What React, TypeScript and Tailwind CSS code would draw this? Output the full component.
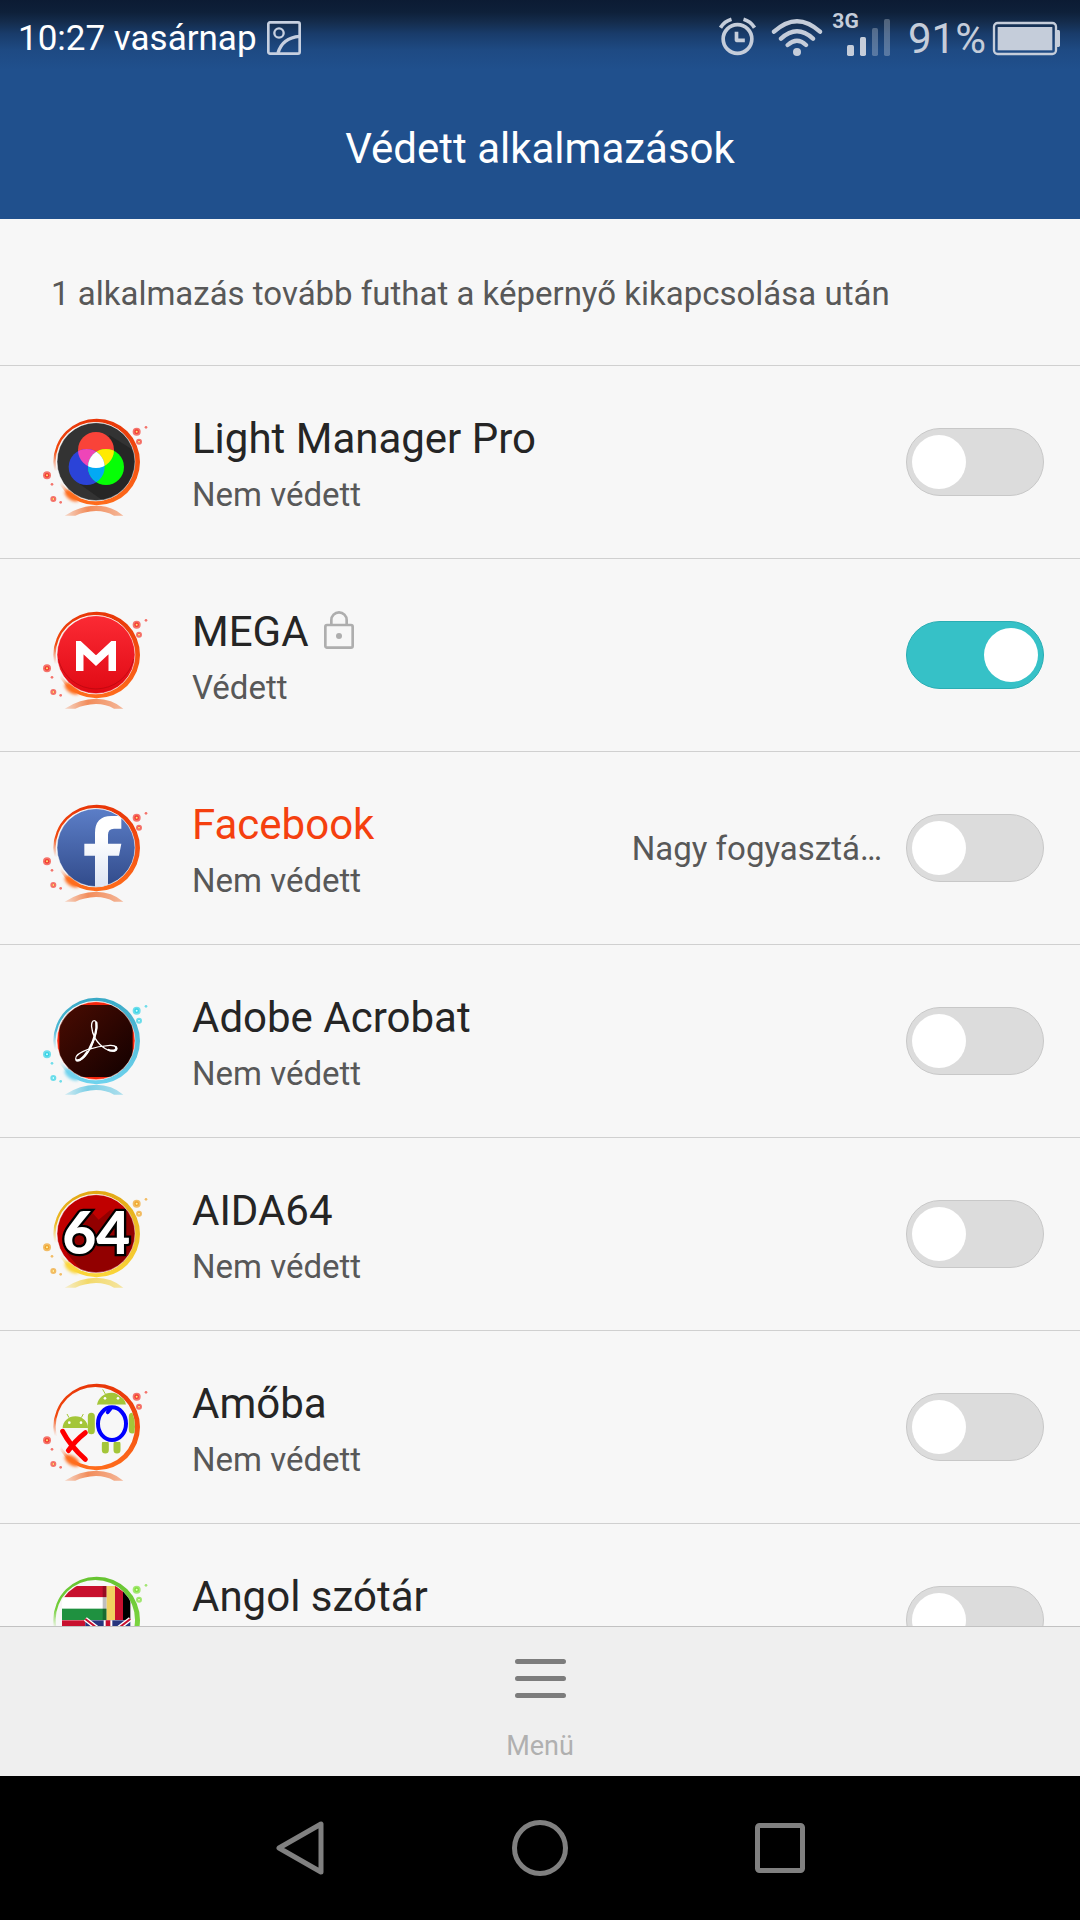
import { ReactNode, useState } from "react";

type Tone = "fire" | "ice" | "gold" | "leaf";

type AppItem = {
  id: string;
  name: string;
  tone: Tone;
  art: ReactNode;
  hungry?: boolean;
};

const tones: Record<Tone, { top: string; bottom: string; dot: string; core: string; shade: string }> = {
  fire: { top: "#e83608", bottom: "#ff6d1c", dot: "#f43c30", core: "#ffe27a", shade: "#f28c5a" },
  ice: { top: "#3aa9c6", bottom: "#6fd3ee", dot: "#35d3e6", core: "#d6ffff", shade: "#7ccfe6" },
  gold: { top: "#e2a816", bottom: "#fbd63a", dot: "#f0a52c", core: "#fff3a8", shade: "#f3d968" },
  leaf: { top: "#66c431", bottom: "#8be04c", dot: "#7fe03a", core: "#e6ffc0", shade: "#a9e584" },
};

const dots = [
  [320, 98, 12],
  [327, 128, 9],
  [348, 85, 4],
  [51, 229, 12],
  [66, 256, 4],
  [70, 300, 9],
  [92, 310, 4],
];

function AppIcon({ id, tone, children }: { id: string; tone: Tone; children: ReactNode }) {
  const c = tones[tone];
  return (
    <svg viewBox="0 0 390 378" className="h-[126px] w-[130px] flex-none" aria-hidden="true">
      <defs>
        <linearGradient id={`${id}-ring`} x1="0" y1="0" x2="0" y2="1">
          <stop offset="0" stopColor={c.top} />
          <stop offset="1" stopColor={c.bottom} />
        </linearGradient>
        <linearGradient id={`${id}-shade`} x1="0" y1="0" x2="1" y2="0">
          <stop offset="0" stopColor={c.shade} stopOpacity="0.3" />
          <stop offset="0.4" stopColor={c.shade} />
          <stop offset="1" stopColor={c.shade} stopOpacity="0.6" />
        </linearGradient>
        <radialGradient id={`${id}-fade`} gradientUnits="userSpaceOnUse" cx="68" cy="240" r="84">
          <stop offset="0.3" stopColor="#000" />
          <stop offset="1" stopColor="#fff" />
        </radialGradient>
        <mask id={`${id}-mask`}>
          <rect width="390" height="378" fill={`url(#${id}-fade)`} />
        </mask>
        <filter id={`${id}-blur`} x="-50%" y="-50%" width="200%" height="200%">
          <feGaussianBlur stdDeviation="4" />
        </filter>
        <filter id={`${id}-soft`} x="-50%" y="-50%" width="200%" height="200%">
          <feGaussianBlur stdDeviation="2" />
        </filter>
        <clipPath id={`${id}-disc`}>
          <circle cx="198" cy="188" r="117" />
        </clipPath>
      </defs>
      <path d="M104 350 Q150 320 198 320 Q246 320 280 350 L252 350 Q228 336 198 336 Q162 338 136 350 Z" fill={`url(#${id}-shade)`} />
      <path
        fillRule="evenodd"
        mask={`url(#${id}-mask)`}
        fill={`url(#${id}-ring)`}
        d="M70 189 a130 130 0 1 0 260 0 a130 130 0 1 0 -260 0 Z M77 188 a119 119 0 1 0 238 0 a119 119 0 1 0 -238 0 Z"
      />
      <ellipse cx="126" cy="290" rx="25" ry="13" transform="rotate(34 126 290)" fill={c.bottom} filter={`url(#${id}-blur)`} />
      {dots.map(([x, y, r]) => (
        <g key={`${x}-${y}`}>
          <circle cx={x} cy={y} r={r} fill={c.dot} opacity="0.7" filter={`url(#${id}-soft)`} />
          {r > 5 && <circle cx={x} cy={y} r={r - 5} fill={c.dot} />}
          {r > 5 && <circle cx={x} cy={y} r="3" fill={c.core} />}
        </g>
      ))}
      <g clipPath={`url(#${id}-disc)`}>{children}</g>
      {id !== "amoba" && id !== "angol" && (
        <circle cx="198" cy="188" r="117" fill="none" stroke="#fff" strokeOpacity="0.7" strokeWidth="2" />
      )}
    </svg>
  );
}

const lightArt = (
  <>
    <rect width="390" height="378" fill="#333" />
    <path d="M238 108 L330 166 V320 H240 L150 256 Z" fill="#262626" />
    <g>
      <circle cx="198" cy="153" r="54" fill="#f94339" />
      <circle cx="170" cy="204" r="54" fill="#2b43d8" />
      <circle cx="228" cy="204" r="54" fill="#06ff06" />
    </g>
    <clipPath id="lm-red">
      <circle cx="198" cy="153" r="54" />
    </clipPath>
    <clipPath id="lm-blue">
      <circle cx="170" cy="204" r="54" />
    </clipPath>
    <circle cx="170" cy="204" r="54" fill="#ee45b8" clipPath="url(#lm-red)" />
    <circle cx="228" cy="204" r="54" fill="#ffea00" clipPath="url(#lm-red)" />
    <circle cx="228" cy="204" r="54" fill="#03a9f4" clipPath="url(#lm-blue)" />
    <g clipPath="url(#lm-red)">
      <circle cx="228" cy="204" r="54" fill="#fff" clipPath="url(#lm-blue)" />
    </g>
  </>
);

const megaArt = (
  <>
    <linearGradient id="mega-bg" x1="0" y1="0" x2="0" y2="1">
      <stop offset="0.2" stopColor="#fb2a34" />
      <stop offset="0.8" stopColor="#e00a14" />
    </linearGradient>
    <rect width="390" height="378" fill="url(#mega-bg)" />
    <path d="M85 201 A116 116 0 0 0 311 201" fill="none" stroke="#a8060c" strokeWidth="3" opacity="0.5" />
    <clipPath id="mega-mark">
      <rect x="138" y="147" width="120" height="90" />
    </clipPath>
    <path d="M149 250 V160 L198 206 L247 160 V250" fill="none" stroke="#fff" strokeWidth="23" clipPath="url(#mega-mark)" />
  </>
);

const facebookArt = (
  <>
    <linearGradient id="fb-bg" x1="0" y1="0" x2="0" y2="1">
      <stop offset="0.2" stopColor="#5b7dc6" />
      <stop offset="0.8" stopColor="#324c8c" />
    </linearGradient>
    <linearGradient id="fb-mark" gradientUnits="userSpaceOnUse" x1="0" y1="90" x2="0" y2="305">
      <stop offset="0.3" stopColor="#fff" />
      <stop offset="1" stopColor="#dde4f3" />
    </linearGradient>
    <rect width="390" height="378" fill="url(#fb-bg)" />
    <path
      d="M195 310 V212 H163 V176 H195 V144 Q195 93 244 93 H274 V131 H252 Q234 131 234 149 V176 H274 L267 212 H234 V310 Z"
      fill="url(#fb-mark)"
    />
  </>
);

const acrobatArt = (
  <>
    <linearGradient id="ac-bg" x1="0" y1="0" x2="1" y2="1">
      <stop offset="0" stopColor="#4a0c02" />
      <stop offset="1" stopColor="#120000" />
    </linearGradient>
    <rect width="390" height="378" fill="#f5260c" />
    <rect x="88" y="81" width="220" height="216" fill="url(#ac-bg)" />
    <g transform="translate(0 6)" fill="none" stroke="#fff" strokeLinecap="round">
      <path
        strokeWidth="4"
        d="M193 122 C181 122 182 150 196 176 C213 204 240 216 254 213 C266 208 260 195 240 196 C200 198 135 215 137 237 C142 251 165 236 184 200 C200 165 206 122 193 122 Z"
      />
      <path strokeWidth="7" d="M199 128 C202 148 191 182 178 207 M236 210 C250 215 263 210 258 202 M140 241 C150 243 162 231 172 216" />
    </g>
  </>
);

const aidaArt = (
  <>
    <rect width="390" height="378" fill="#c00000" />
    <path d="M180 118 L206 146 L240 118 H330 V330 H180 L110 246 Z" fill="#920000" />
    <text
      x="199"
      y="248"
      textAnchor="middle"
      className="font-['Lato'] text-[176px] font-black"
      fill="#fff"
      stroke="#000"
      strokeWidth="14"
      paintOrder="stroke"
    >
      64
    </text>
  </>
);

const amobaArt = (
  <>
    <g fill="#a4c639" stroke="#a4c639">
      <path stroke="none" d="M98 192 A38 35 0 0 1 174 192 Z M201 122 A44 42 0 0 1 288 122 Z" />
      <path fill="none" strokeWidth="3" d="M117 161 L111 150 M154 161 L160 150 M226 90 L218 76 M265 90 L273 76" />
      <path fill="none" strokeLinecap="round" strokeWidth="21" d="M184 157 V200 M307 157 V198 M226 240 V258 M261 240 V258" />
    </g>
    <g fill="#fff">
      <circle cx="118" cy="176" r="4" />
      <circle cx="153" cy="176" r="4" />
      <circle cx="225" cy="103" r="4" />
      <circle cx="264" cy="103" r="4" />
      <rect x="205" y="122" width="84" height="112" fill="#f7f7f7" />
    </g>
    <ellipse cx="246" cy="179" rx="42" ry="49" fill="#f7f7f7" stroke="#0000ff" strokeWidth="12" />
    <path d="M233 145 L242 134" stroke="#0000ff" strokeWidth="11" strokeLinecap="round" />
    <path d="M98 202 Q120 245 166 286 M166 206 Q135 230 115 260" fill="none" stroke="#ff0000" strokeWidth="15" strokeLinecap="round" />
  </>
);

const angolArt = (
  <>
    <rect x="96" y="87" width="134" height="34" fill="#c8102e" />
    <rect x="96" y="121" width="134" height="34" fill="#fff" />
    <rect x="96" y="155" width="134" height="34" fill="#1f9140" />
    <rect x="218" y="87" width="12" height="102" fill="#000" opacity="0.25" />
    <rect x="230" y="87" width="25" height="102" fill="#f0d060" />
    <rect x="255" y="87" width="24" height="102" fill="#c8102e" />
    <rect x="279" y="87" width="22" height="102" fill="#000" />
    <rect x="96" y="190" width="70" height="100" fill="#c8102e" />
    <rect x="166" y="190" width="135" height="100" fill="#27357e" />
    <path d="M166 186 L301 290 M301 186 L166 290" stroke="#fff" strokeWidth="14" />
    <path d="M166 186 L301 290 M301 186 L166 290" stroke="#c8102e" strokeWidth="6" />
    <path d="M234 190 V290" stroke="#fff" strokeWidth="26" />
    <path d="M234 190 V290" stroke="#c8102e" strokeWidth="14" />
  </>
);

const apps: AppItem[] = [
  { id: "light", name: "Light Manager Pro", tone: "fire", art: lightArt },
  { id: "mega", name: "MEGA", tone: "fire", art: megaArt },
  { id: "facebook", name: "Facebook", tone: "fire", art: facebookArt, hungry: true },
  { id: "acrobat", name: "Adobe Acrobat", tone: "ice", art: acrobatArt },
  { id: "aida", name: "AIDA64", tone: "gold", art: aidaArt },
  { id: "amoba", name: "Amőba", tone: "fire", art: amobaArt },
  { id: "angol", name: "Angol szótár", tone: "leaf", art: angolArt },
];

function StatusBar() {
  return (
    <div className="flex h-[76px] items-center bg-[linear-gradient(to_bottom,#0c1b33_0px,#0e2039_12px,#142c4c_22px,#193c6b_34px,#1e4a83_50px,#20508d_70px)] pr-5 pl-[18px] text-white">
      <span className="pt-0.5 text-[35px] leading-[74px]">10:27 vasárnap</span>
      <svg viewBox="0 0 102 102" className="ml-2.5 h-[34px] w-[34px]" fill="none" stroke="#c7d0e0" aria-hidden="true">
        <rect x="4" y="4" width="94" height="94" rx="5" strokeWidth="8" />
        <circle cx="36" cy="36" r="14" strokeWidth="7" />
        <path d="M33 96 Q46 50 98 46" strokeWidth="10" />
      </svg>

      <div className="ml-auto flex items-center text-[#c5cdda]">
        <svg viewBox="56 0 110 228" className="h-[76px] w-[37px]" fill="none" stroke="currentColor" aria-hidden="true">
          <circle cx="111" cy="117" r="43" strokeWidth="11" />
          <path d="M108 95 V121 H133" strokeWidth="11" strokeLinejoin="round" />
          <path d="M60 83 Q72 64 93 58 M162 83 Q150 64 129 58" strokeWidth="11" />
        </svg>
        <svg viewBox="213 0 156 228" className="ml-[15px] h-[76px] w-[52px]" fill="none" stroke="currentColor" strokeLinecap="round" strokeWidth="13" aria-hidden="true">
          <path d="M222 95 Q291 32 360 95 M243 116 Q291 72 339 116 M263 135 Q291 110 318 135" />
          <circle cx="291" cy="156" r="12" fill="currentColor" stroke="none" />
        </svg>
        <svg viewBox="396 0 180 228" className="ml-[9px] h-[76px] w-[60px]" fill="currentColor" role="img" aria-label="3G">
          <text x="397" y="84" className="font-['Roboto'] text-[63px] font-bold">
            3G
          </text>
          <rect x="441" y="135" width="21" height="33" rx="5" />
          <rect x="480" y="111" width="18" height="57" rx="5" />
          <rect x="516" y="84" width="18" height="84" rx="5" opacity="0.35" />
          <rect x="552" y="57" width="18" height="111" rx="5" opacity="0.35" />
        </svg>
        <span className="ml-4 pt-0.5 text-[42px] leading-[74px]">91%</span>
        <svg viewBox="876 0 204 228" className="ml-1.5 h-[76px] w-[68px]" fill="currentColor" aria-hidden="true">
          <rect x="882" y="69" width="186" height="93" rx="11" fill="none" stroke="currentColor" strokeWidth="7" />
          <rect x="893" y="81" width="164" height="70" />
          <path d="M1068 90 H1076 Q1080 90 1080 95 V136 Q1080 141 1076 141 H1068 Z" />
        </svg>
      </div>
    </div>
  );
}

function LockIcon() {
  return (
    <svg viewBox="0 0 90 114" className="mb-1 h-[38px] w-[30px]" fill="none" stroke="#aeaeae" strokeWidth="8" aria-hidden="true">
      <rect x="4" y="42" width="82" height="68" rx="5" />
      <path d="M22 42 V27 A23 23 0 0 1 68 27 V42" />
      <circle cx="45" cy="75" r="9" fill="#aeaeae" stroke="none" />
    </svg>
  );
}

export default function App() {
  const [enabled, setEnabled] = useState<Record<string, boolean>>({ mega: true });
  const count = Object.values(enabled).filter(Boolean).length;

  return (
    <div className="flex h-screen flex-col overflow-hidden bg-[#f7f7f7] font-['Roboto',sans-serif]">
      <header className="flex-none bg-[#20508d]">
        <StatusBar />
        <h1 className="pt-0.5 text-center text-[42px] leading-[141px] text-white">Védett alkalmazások</h1>
      </header>

      <main className="min-h-0 flex-1 overflow-y-auto [scrollbar-width:none]">
        <p className="border-b border-[#d0d0d0] px-[51px] pt-1 text-[33px] leading-[142px] text-[#585858]">
          {count} alkalmazás tovább futhat a képernyő kikapcsolása után
        </p>
        <ul>
          {apps.map((app) => (
            <li key={app.id} className="flex h-[193px] items-center border-b border-[#d0d0d0] pr-9 pl-[30px]">
              <AppIcon id={app.id} tone={app.tone}>
                {app.art}
              </AppIcon>
              <label htmlFor={`switch-${app.id}`} className="ml-8 min-w-0 flex-1 pt-0.5">
                <span className="flex items-center gap-[15px] text-[42px] leading-16">
                  <span className={app.hungry ? "text-[#f5400f]" : "text-[#252525]"}>{app.name}</span>
                  {enabled[app.id] && <LockIcon />}
                </span>
                <span className="block text-[33px] leading-12 text-[#585858]">{enabled[app.id] ? "Védett" : "Nem védett"}</span>
              </label>
              {app.hungry && <span className="mr-6 pt-0.5 text-[33px] leading-12 text-[#585858]">Nagy fogyasztá…</span>}
              <input
                id={`switch-${app.id}`}
                type="checkbox"
                role="switch"
                checked={!!enabled[app.id]}
                onChange={(event) => setEnabled({ ...enabled, [app.id]: event.target.checked })}
                className="flex h-[68px] w-[138px] flex-none appearance-none items-center rounded-full border border-[#c8c8c8] bg-[#dcdcdc] px-[5px] before:h-[54px] before:w-[54px] before:rounded-full before:bg-white checked:justify-end checked:border-[#29adb3] checked:bg-[#36c1c7]"
              />
            </li>
          ))}
        </ul>
      </main>

      <footer className="flex-none border-t border-[#c2c2c2] bg-[#efefef]">
        <button type="button" className="mx-auto flex flex-col items-center gap-8 px-8 pt-8 pb-3.5">
          <svg viewBox="0 0 52 39" className="h-[39px] w-[52px]" stroke="#7c7c7c" strokeWidth="5" strokeLinecap="round" aria-hidden="true">
            <path d="M3.5 2.5 H49.5 M3.5 19.5 H49.5 M3.5 36.5 H49.5" />
          </svg>
          <span className="text-[27px] leading-8 text-[#b0b0b0]">Menü</span>
        </button>
      </footer>

      <nav className="flex h-36 flex-none items-center justify-center bg-black">
        <button type="button" aria-label="Vissza" className="flex w-2/9 justify-center">
          <svg viewBox="0 0 48 56" className="h-14 w-12" fill="none" stroke="#808080" strokeWidth="5" strokeLinejoin="round">
            <path d="M45 4 V52 L3 28 Z" />
          </svg>
        </button>
        <button type="button" aria-label="Kezdőképernyő" className="flex w-2/9 justify-center">
          <svg viewBox="0 0 56 56" className="h-14 w-14" fill="none" stroke="#808080" strokeWidth="5">
            <circle cx="28" cy="28" r="25.5" />
          </svg>
        </button>
        <button type="button" aria-label="Áttekintés" className="flex w-2/9 justify-center">
          <svg viewBox="0 0 50 50" className="h-[50px] w-[50px]" fill="none" stroke="#808080" strokeWidth="5">
            <rect x="2.5" y="2.5" width="45" height="45" rx="2" />
          </svg>
        </button>
      </nav>
    </div>
  );
}
